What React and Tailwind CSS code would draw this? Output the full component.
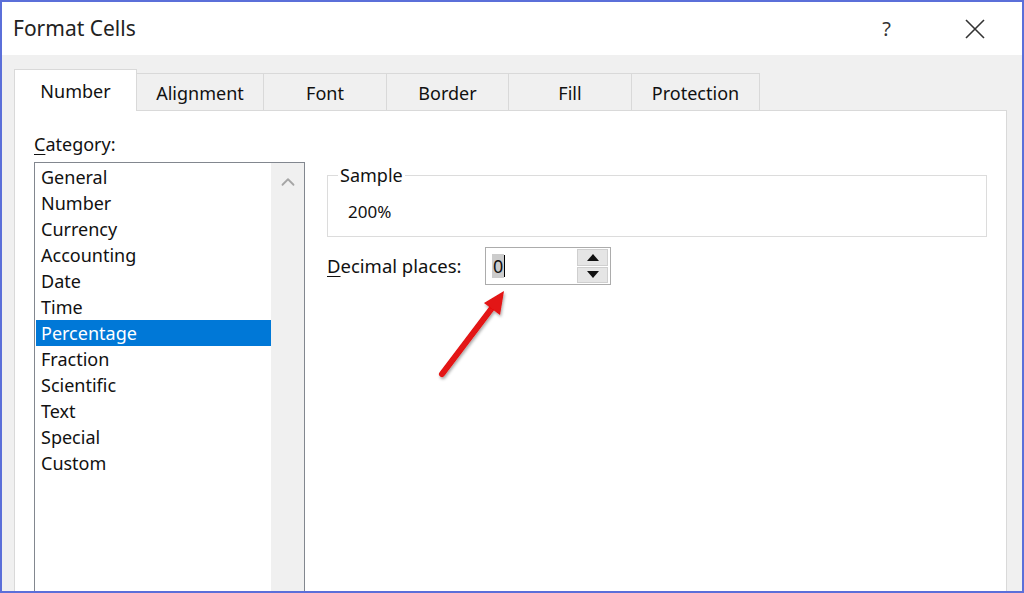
import { ChevronUp } from 'lucide-react';

const categories = [
  'General',
  'Number',
  'Currency',
  'Accounting',
  'Date',
  'Time',
  'Percentage',
  'Fraction',
  'Scientific',
  'Text',
  'Special',
  'Custom',
];

const tabs = [
  { name: 'Number', w: 'w-[123px]' },
  { name: 'Alignment', w: 'w-[127px]' },
  { name: 'Font', w: 'w-[123px]' },
  { name: 'Border', w: 'w-[122px]' },
  { name: 'Fill', w: 'w-[123px]' },
  { name: 'Protection', w: 'w-[128px]' },
];

const App = () => {
  return (
    <div
      className="relative w-[1024px] h-[593px] overflow-hidden border-2 border-[#5b6fd9] bg-[#f0f0f0] flex flex-col text-[#111]"
      style={{ fontFamily: '"Noto Sans", "Open Sans", sans-serif' }}
    >
      {/* Title bar */}
      <header className="h-[53px] shrink-0 bg-white flex items-center justify-between pl-[11px] pr-[30px]">
        <h1 className="text-[21px] text-[#222]">Format Cells</h1>
        <div className="flex items-center gap-[74px] text-[#333]">
          <span className="text-[20px]">?</span>
          <svg width="20" height="20" viewBox="0 0 20 20" className="mr-[7px]">
            <path d="M1 1 L19 19 M19 1 L1 19" stroke="#333" strokeWidth="1.6" fill="none" />
          </svg>
        </div>
      </header>

      {/* Body */}
      <main className="flex-1 flex flex-col pl-[12px] pt-[14px]">
        {/* Tabs */}
        <div className="flex items-end h-[42px] relative z-10 -mb-px">
          {tabs.map((t, i) =>
            i === 0 ? (
              <div
                key={t.name}
                className={`${t.w} h-[42px] bg-white border border-b-0 border-[#d9d9d9] flex items-center justify-center text-[18px] pt-[2px]`}
              >
                {t.name}
              </div>
            ) : (
              <div
                key={t.name}
                className={`${t.w} h-[38px] bg-[#f0f0f0] border border-l-0 border-[#d9d9d9] flex items-center justify-center text-[18px] pt-[2px]`}
              >
                {t.name}
              </div>
            )
          )}
        </div>

        {/* Panel */}
        <section className="flex-1 w-[993px] bg-white border border-b-0 border-[#d9d9d9] flex gap-[22px] pl-[19px] pr-[19px] pt-[21px]">
          {/* Category list */}
          <div className="w-[271px] flex flex-col">
            <label className="text-[18px] leading-[24px] h-[30px]">
              <span className="underline underline-offset-[3px] decoration-1">C</span>ategory:
            </label>
            <div className="flex-1 border border-[#82878f] border-b-0 flex">
              <ul className="flex-1 pt-[1px] pl-[1px]">
                {categories.map((c) => (
                  <li
                    key={c}
                    className={
                      c === 'Percentage'
                        ? 'h-[26px] leading-[26px] text-[18px] pl-[5px] bg-[#0078d7] text-white'
                        : 'h-[26px] leading-[26px] text-[18px] pl-[5px]'
                    }
                  >
                    {c}
                  </li>
                ))}
              </ul>
              <div className="w-[33px] bg-[#f0f0f0] flex justify-center pt-[8px]">
                <ChevronUp size={22} strokeWidth={2} color="#a6a6a6" />
              </div>
            </div>
          </div>

          {/* Right side */}
          <div className="flex-1 flex flex-col pt-[43px]">
            <fieldset className="border border-[#dcdcdc] h-[74px] -mt-[12px] pl-[20px]">
              <legend className="text-[18px] px-[2px] -ml-[10px] leading-[24px]">Sample</legend>
              <div className="text-[17px] pt-[12px]">200%</div>
            </fieldset>

            <div className="flex items-center mt-[10px]">
              <label className="text-[18.5px] w-[158px]">
                <span className="underline underline-offset-[3px] decoration-1">D</span>ecimal places:
              </label>
              <div className="w-[126px] h-[38px] border border-[#acacac] flex items-center pl-[6px] pr-[2px]">
                <div className="flex-1 flex items-center">
                  <span className="bg-[#cccccc] text-[18px] leading-[24px] px-[1px]">0</span>
                  <span className="w-px h-[22px] bg-black"></span>
                </div>
                <div className="w-[31px] h-[34px] flex flex-col gap-px">
                  <button className="flex-1 bg-[#e5e5e5] border border-[#cfcfcf] flex items-center justify-center">
                    <svg width="12" height="7" viewBox="0 0 12 7">
                      <path d="M6 0 L12 7 L0 7 Z" fill="#111" />
                    </svg>
                  </button>
                  <button className="flex-1 bg-[#e5e5e5] border border-[#cfcfcf] flex items-center justify-center">
                    <svg width="12" height="7" viewBox="0 0 12 7">
                      <path d="M0 0 L12 0 L6 7 Z" fill="#111" />
                    </svg>
                  </button>
                </div>
              </div>
            </div>
          </div>
        </section>
      </main>

      {/* Red callout arrow */}
      <svg className="absolute left-0 top-0 pointer-events-none" width="1024" height="593">
        <defs>
          <filter id="shadow" x="-20%" y="-20%" width="140%" height="140%">
            <feDropShadow dx="1" dy="2" stdDeviation="1.5" floodColor="#000" floodOpacity="0.35" />
          </filter>
        </defs>
        <g filter="url(#shadow)">
          <line x1="440" y1="372" x2="490" y2="306" stroke="#e31212" strokeWidth="6" strokeLinecap="round" />
          <polygon points="502,289 498,313 482,301" fill="#e31212" />
        </g>
      </svg>
    </div>
  );
};

export default App;
